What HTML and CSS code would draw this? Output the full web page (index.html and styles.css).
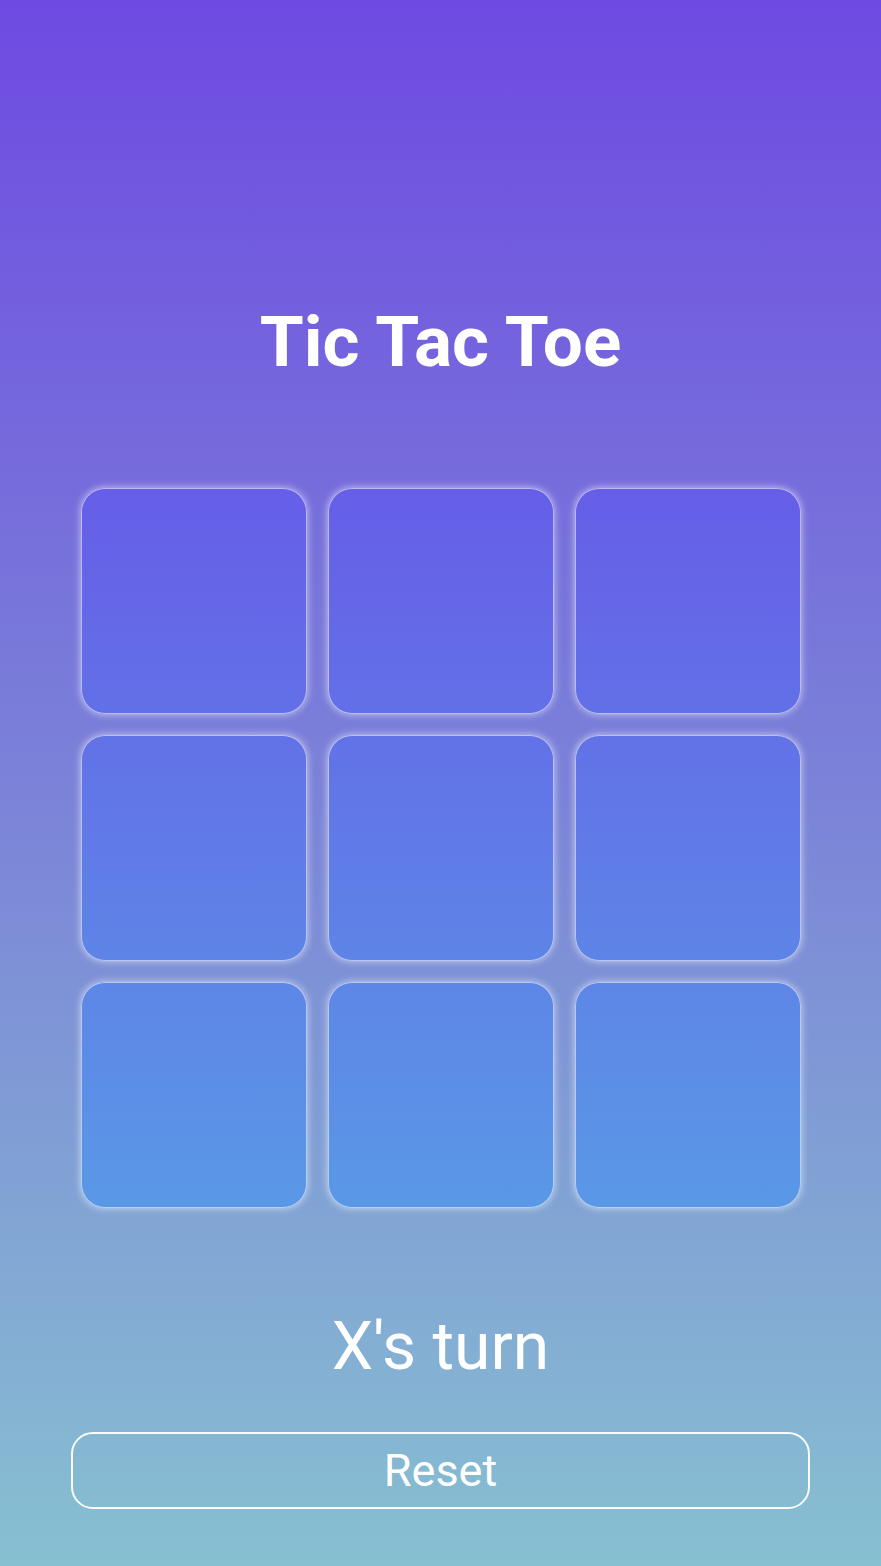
FILE: index.html
```html
<!DOCTYPE html>
<html lang="en">
<head>
<meta charset="utf-8">
<title>Tic Tac Toe</title>
<link rel="stylesheet" href="styles.css">
</head>
<body>
<main class="app">
  <h1 class="title">Tic Tac Toe</h1>
  <div class="board">
    <button class="cell"></button>
    <button class="cell"></button>
    <button class="cell"></button>
    <button class="cell"></button>
    <button class="cell"></button>
    <button class="cell"></button>
    <button class="cell"></button>
    <button class="cell"></button>
    <button class="cell"></button>
  </div>
  <p class="status">X's turn</p>
  <button class="reset">Reset</button>
</main>
</body>
</html>
```
FILE: styles.css
```css
html, body {
  margin: 0;
  padding: 0;
}
body {
  font-family: Roboto, "Noto Sans", sans-serif;
  background: linear-gradient(to bottom, #6e4ae2 0%, #7b82d8 50%, #87c0d1 100%);
  min-height: 1566px;
  color: #fff;
}
.app {
  height: 1566px;
  box-sizing: border-box;
  display: flex;
  flex-direction: column;
  align-items: center;
  padding-top: 306px;
}
.title {
  margin: 0;
  font-size: 71px;
  line-height: 72px;
  font-weight: 700;
  color: #fff;
}
.board {
  margin-top: 110px;
  display: grid;
  grid-template-columns: repeat(3, 226px);
  grid-auto-rows: 226px;
  gap: 21px;
  margin-left: 1px;
}
.cell {
  border: 1.5px solid rgba(255, 255, 255, 0.55);
  border-radius: 24px;
  background: linear-gradient(to bottom, #665ee8 488px, #5a98e6 1207px) fixed;
  box-shadow: 0 0 7px 1px rgba(255, 255, 255, 0.5);
  padding: 0;
  cursor: pointer;
}
.status {
  margin: 107px 0 0;
  font-size: 66px;
  line-height: 64px;
  font-weight: 400;
}
.reset {
  margin-top: 53px;
  width: 739px;
  height: 77px;
  box-sizing: border-box;
  border: 2px solid rgba(255, 255, 255, 0.95);
  border-radius: 22px;
  background: transparent;
  color: #fff;
  font-family: Roboto, "Noto Sans", sans-serif;
  font-size: 45px;
  line-height: 1;
  padding: 0;
}
```
